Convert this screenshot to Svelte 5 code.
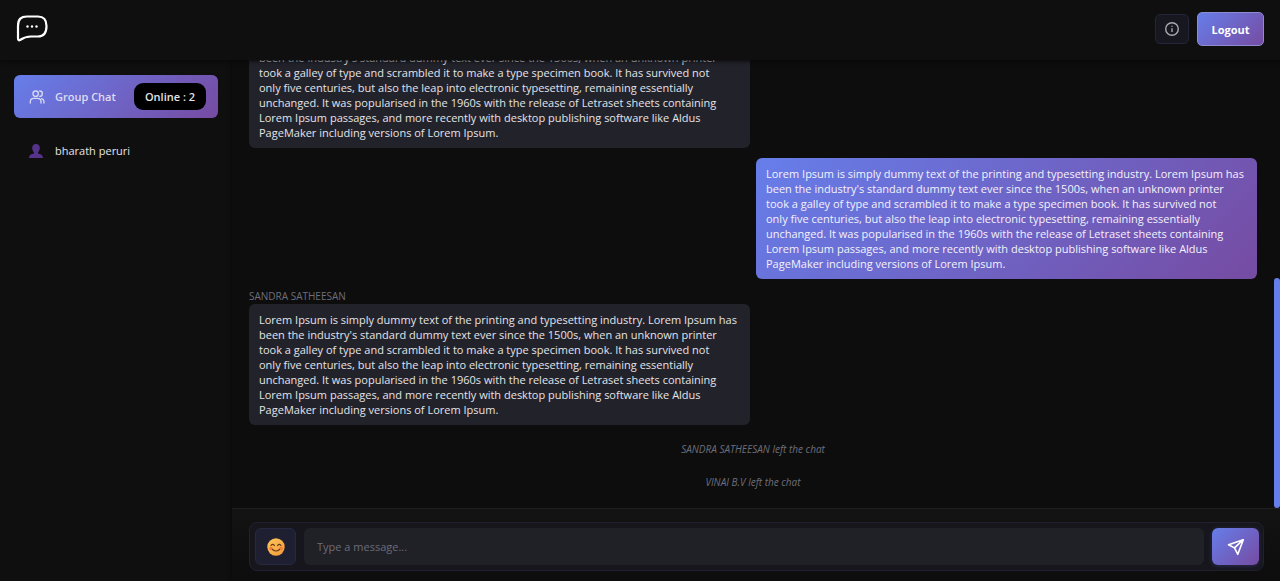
<script>
    import { onMount } from "svelte";

    const lorem = [
        "Lorem Ipsum is simply dummy text of the printing and typesetting industry. Lorem Ipsum has",
        "been the industry's standard dummy text ever since the 1500s, when an unknown printer",
        "took a galley of type and scrambled it to make a type specimen book. It has survived not",
        "only five centuries, but also the leap into electronic typesetting, remaining essentially",
        "unchanged. It was popularised in the 1960s with the release of Letraset sheets containing",
        "Lorem Ipsum passages, and more recently with desktop publishing software like Aldus",
        "PageMaker including versions of Lorem Ipsum.",
    ].join("\n");

    let users = ["bharath peruri"];
    let messages = [
        { type: "received", sender: "SANDRA SATHEESAN", text: lorem },
        { type: "sent", text: lorem },
        { type: "received", sender: "SANDRA SATHEESAN", text: lorem },
        { type: "notice", text: "SANDRA SATHEESAN left the chat" },
        { type: "notice", text: "VINAI B.V left the chat" },
    ];
    let draft = "";
    let list;

    function scrollDown() {
        list.scrollTop = list.scrollHeight;
    }

    function send() {
        if (!draft.trim()) return;
        messages = [...messages, { type: "sent", text: draft }];
        draft = "";
        setTimeout(scrollDown);
    }

    onMount(scrollDown);
</script>

<div class="app">
    <header>
        <svg class="logo" viewBox="0 0 32 28" role="img" aria-label="Chat">
            <path
                d="M2 23V11C2 4 5 1.500 11 1.500h11c6 0 8.500 3 8.500 9.500S28 21.500 22 21.500h-7c-5 0-8 1.500-11 3.500-1.300.7-2 0-2-2z"
            />
            <circle cx="11.500" cy="11.500" r="1.200" />
            <circle cx="16" cy="11.500" r="1.200" />
            <circle cx="20.500" cy="11.500" r="1.200" />
        </svg>
        <div class="actions">
            <button class="info" aria-label="Info">
                <svg viewBox="0 0 16 16">
                    <circle cx="8" cy="8" r="6.300" />
                    <path d="M8 7.300v3.700M8 4.700v1.100" />
                </svg>
            </button>
            <button class="logout">Logout</button>
        </div>
    </header>

    <aside>
        <button class="group">
            <svg viewBox="0 0 24 24">
                <circle cx="10" cy="7" r="4" />
                <path d="M2 21v-2a5 5 0 0 1 5-5h6a5 5 0 0 1 5 5v2" />
                <path d="M16 3a4 4 0 0 1 0 8M19 14.500a5 5 0 0 1 3.500 4.500v2" />
            </svg>
            <span class="title">Group Chat</span>
            <span class="online">Online : 2</span>
        </button>
        {#each users as user}
            <button class="user">
                <svg viewBox="0 0 16 16">
                    <path
                        d="M8 1c2.400 0 3.800 1.600 3.800 4 0 1.900-.7 3.500-1.800 4.400v1c2.500.5 4.800 1.400 5 4.600H1c.2-3.200 2.500-4.100 5-4.600v-1C4.900 8.500 4.200 6.900 4.200 5c0-2.400 1.400-4 3.800-4z"
                    />
                </svg>
                <span>{user}</span>
            </button>
        {/each}
    </aside>

    <main>
        <div class="chat">
            <div class="messages" bind:this={list}>
                {#each messages as message}
                    {#if message.type === "notice"}
                        <p class="notice">{message.text}</p>
                    {:else}
                        <div class="message {message.type}">
                            {#if message.sender}
                                <span class="sender">{message.sender}</span>
                            {/if}
                            <p class="bubble">{message.text}</p>
                        </div>
                    {/if}
                {/each}
            </div>
            <div class="thumb"></div>
        </div>

        <div class="footer">
            <form on:submit|preventDefault={send}>
                <button type="button" class="emoji" aria-label="Emoji">
                    <svg viewBox="0 0 18 18">
                        <defs>
                            <linearGradient id="face" x1="0" y1="0" x2="1" y2="1">
                                <stop offset="0" stop-color="#ffc85a" />
                                <stop offset="1" stop-color="#f0983a" />
                            </linearGradient>
                        </defs>
                        <circle cx="9" cy="9" r="8.700" fill="url(#face)" />
                        <circle cx="4" cy="10.500" r="1.800" fill="#f27b3c" />
                        <circle cx="14" cy="10.500" r="1.800" fill="#f27b3c" />
                        <path
                            d="M4 7.500q1.700-2.300 3.400 0M10.600 7.500q1.700-2.300 3.400 0M5.500 11.500q3.500 3 7 0"
                        />
                    </svg>
                </button>
                <input
                    type="text"
                    placeholder="Type a message..."
                    aria-label="Message"
                    bind:value={draft}
                />
                <button class="send" aria-label="Send">
                    <svg viewBox="0 0 18 18">
                        <path d="M16.300 1.700 1.500 6.700l6 3.200 3.300 6.400zM16.300 1.700 7.500 9.900" />
                    </svg>
                </button>
            </form>
        </div>
    </main>
</div>

<style>
    :global(body) {
        margin: 0;
        background: #0d0d0d;
    }

    .app {
        display: grid;
        grid-template-columns: 232px 1fr;
        grid-template-rows: 60px 1fr;
        height: 100vh;
        color: #e4e4e7;
        font-family: "Open Sans", "Noto Sans", sans-serif;
        font-size: 11px;
    }

    button,
    input {
        box-sizing: border-box;
        margin: 0;
        border: none;
        font: inherit;
        color: inherit;
    }

    button {
        display: flex;
        align-items: center;
        justify-content: center;
        padding: 0;
        background: none;
        cursor: pointer;
    }

    svg {
        display: block;
        flex-shrink: 0;
    }

    header {
        grid-column: 1 / 3;
        z-index: 1;
        display: flex;
        align-items: center;
        justify-content: space-between;
        padding: 0 16px 2px;
        background: #0f0f0f;
        box-shadow: 0 1px 4px #080808;
    }

    .logo {
        width: 32px;
        height: 28px;
        fill: none;
        stroke: #fff;
        stroke-width: 2.2;
        stroke-linejoin: round;
    }

    .logo circle {
        fill: #fff;
        stroke: none;
    }

    .actions {
        display: flex;
        align-items: center;
        gap: 8px;
    }

    .info {
        width: 34px;
        height: 30px;
        border: 1px solid #23253a;
        border-radius: 5px;
        background: #16171f;
    }

    .info svg {
        width: 16px;
        height: 16px;
        fill: none;
        stroke: #a9a9b4;
        stroke-width: 1.4;
    }

    .logout {
        width: 67px;
        height: 34px;
        border: 1px solid #8f8bd0;
        border-radius: 5px;
        background: linear-gradient(135deg, #667eea, #764ba2);
        background-origin: border-box;
        color: #fff;
        font-weight: 700;
    }

    aside {
        display: flex;
        flex-direction: column;
        gap: 11px;
        padding: 15px 14px;
        background: #0f0f0f;
    }

    .group {
        justify-content: flex-start;
        height: 43px;
        padding: 0 12px 0 15px;
        border-radius: 6px;
        background: linear-gradient(135deg, #667eea, #764ba2);
    }

    .group svg {
        width: 16px;
        height: 16px;
        fill: none;
        stroke: #d8d8f4;
        stroke-width: 2;
        stroke-linecap: round;
    }

    .title {
        margin-left: 10px;
        color: #dedcf3;
        font-weight: 600;
    }

    .online {
        margin-left: auto;
        width: 72px;
        border-radius: 9px;
        background: #000;
        line-height: 27px;
        font-weight: 600;
        text-align: center;
    }

    .user {
        justify-content: flex-start;
        gap: 11px;
        height: 43px;
        padding: 0 14px;
    }

    .user svg {
        width: 16px;
        height: 16px;
        fill: #55338a;
    }

    main {
        display: flex;
        flex-direction: column;
        min-width: 0;
        min-height: 0;
        background: #0d0d0d;
        box-shadow: 0 0 4px #080808;
    }

    .chat {
        position: relative;
        flex: 1;
        min-height: 0;
    }

    .messages {
        box-sizing: border-box;
        display: flex;
        flex-direction: column;
        gap: 10px;
        height: 100%;
        padding: 16px 23px 17px 17px;
        overflow-y: auto;
        scrollbar-width: none;
    }

    .thumb {
        position: absolute;
        right: 0;
        bottom: 0;
        width: 6px;
        height: 230px;
        border-radius: 3px;
        background: #667eea;
    }

    .message {
        display: flex;
        flex-direction: column;
        flex-shrink: 0;
        width: 501px;
        max-width: 100%;
    }

    .sent {
        align-self: flex-end;
    }

    .sender {
        color: #6e6d7a;
        font-size: 10px;
        line-height: 15px;
    }

    .bubble {
        margin: 0;
        padding: 8px 10px;
        border-radius: 6px;
        background: #22222b;
        line-height: 15px;
        white-space: pre-line;
    }

    .sent .bubble {
        background: linear-gradient(135deg, #667eea, #764ba2);
        color: #f4f2fb;
    }

    .notice {
        margin: 0;
        padding: 7px 0 1px;
        color: #6e6d7a;
        font-size: 10px;
        font-style: italic;
        line-height: 15px;
        text-align: center;
    }

    .footer {
        padding: 13px 16px 10px 17px;
        border-top: 1px solid #1e1e20;
        background: linear-gradient(#131314, #0d0d0d);
    }

    form {
        display: flex;
        gap: 8px;
        padding: 5px 4px 5px 5px;
        border: 1px solid #212130;
        border-radius: 8px;
        background: #16161c;
    }

    .emoji {
        width: 41px;
        height: 37px;
        border: 1px solid #262941;
        border-radius: 6px;
        background: #1e1f30;
    }

    .emoji svg {
        width: 18px;
        height: 18px;
    }

    .emoji path {
        fill: none;
        stroke: #6b3a1c;
        stroke-width: 1.2;
        stroke-linecap: round;
    }

    input {
        flex: 1;
        min-width: 0;
        padding: 0 13px;
        border-radius: 6px;
        outline: none;
        background: #202027;
    }

    input::placeholder {
        color: #6c6c77;
        opacity: 1;
    }

    .send {
        width: 47px;
        height: 37px;
        border-radius: 6px;
        background: linear-gradient(135deg, #667eea, #764ba2);
        box-shadow: 0 1px 5px #2b2c55;
    }

    .send svg {
        width: 18px;
        height: 18px;
        fill: none;
        stroke: #fff;
        stroke-width: 1.6;
        stroke-linejoin: round;
    }
</style>
